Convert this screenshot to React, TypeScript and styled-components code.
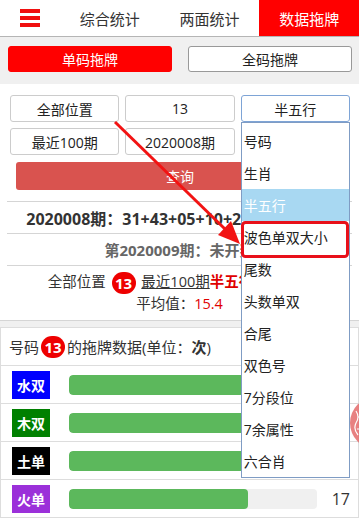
import React from 'react'
import styled, { createGlobalStyle } from 'styled-components'

const GlobalStyle = createGlobalStyle`
  html, body { margin:0; padding:0; background:#fff; }
  body { font-family: "Open Sans", "Noto Sans CJK SC", sans-serif; color:#333; }
  * { box-sizing:border-box; }
`

const Page = styled.div`
  position:relative;
  width:359px;
  height:518px;
  overflow:hidden;
  background:#fff;
`

const Header = styled.div`
  display:flex;
  height:37px;
  border-bottom:1px solid #b5b5b5;
`

const Burger = styled.div`
  width:60px;
  display:flex;
  flex-direction:column;
  justify-content:center;
  gap:3px;
  padding-left:20px;
  span{
    display:block;
    width:20px;
    height:4px;
    background:#f01010;
  }
`

const Tab = styled.div<{ $active?: boolean }>`
  width:100px;
  display:flex;
  align-items:center;
  justify-content:center;
  font-size:15px;
  color:${p => (p.$active ? '#fff' : '#333')};
  background:${p => (p.$active ? '#ff0000' : 'transparent')};
`

const SubBar = styled.div`
  display:grid;
  grid-template-columns:1fr 1fr;
  column-gap:16px;
  padding:9px 7px 12px 8px;
  background:#f0f0f0;
`

const SubBtn = styled.div<{ $active?: boolean }>`
  height:26px;
  display:flex;
  align-items:center;
  justify-content:center;
  border-radius:3px;
  font-size:14px;
  color:${p => (p.$active ? '#fff' : '#222')};
  background:${p => (p.$active ? '#ff0000' : '#fff')};
  border:1px solid ${p => (p.$active ? '#ff0000' : '#999')};
`

const Form = styled.div`
  padding:11px 9px 11px 10px;
`

const FieldGrid = styled.div`
  display:grid;
  grid-template-columns:repeat(3, 1fr);
  gap:6px;
`

const Field = styled.div<{ $focus?: boolean }>`
  position:relative;
  height:27px;
  display:flex;
  align-items:center;
  justify-content:center;
  border:1px solid ${p => (p.$focus ? '#7ea4d6' : '#ccc')};
  border-radius:3px;
  font-size:14px;
  color:#222;
`

const Dropdown = styled.ul`
  position:absolute;
  top:26px;
  left:-1px;
  width:calc(100% + 2px);
  margin:0;
  padding:2px 0 0;
  list-style:none;
  background:#fff;
  border:1px solid #7f9cc4;
  z-index:5;
`

const Option = styled.li<{ $selected?: boolean }>`
  height:32px;
  display:flex;
  align-items:center;
  padding-left:2px;
  font-size:14px;
  color:${p => (p.$selected ? '#fff' : '#222')};
  background:${p => (p.$selected ? '#a8d8f2' : '#fff')};
`

const QueryBtn = styled.div`
  margin:7px 6px 0;
  height:28px;
  display:flex;
  align-items:center;
  justify-content:center;
  border-radius:3px;
  background:#d9534f;
  color:#fff;
  font-size:14px;
`

const Results = styled.div`
  border-bottom:1px solid #d5d5d5;
`

const ResultRow = styled.div<{ $muted?: boolean }>`
  margin:0 7px;
  height:32px;
  display:flex;
  align-items:center;
  justify-content:center;
  white-space:nowrap;
  border-top:1px solid #d5d5d5;
  font-size:${p => (p.$muted ? '15px' : '16px')};
  font-weight:700;
  color:${p => (p.$muted ? '#666' : '#333')};
`

const Summary = styled.div`
  margin:0 7px;
  padding:6px 0;
  border-top:1px solid #d5d5d5;
  text-align:center;
  line-height:20px;
  font-size:14.5px;
  color:#333;
`

const Line = styled.div`
  white-space:nowrap;
`

const Badge = styled.span`
  display:inline-block;
  min-width:24px;
  height:22px;
  padding:0 3px;
  margin:0 2px;
  border-radius:11px;
  background:#ee0000;
  color:#fff;
  font-weight:700;
  font-size:15px;
  line-height:22px;
  text-align:center;
  vertical-align:middle;
`

const Link = styled.span`
  text-decoration:underline;
`

const Red = styled.span<{ $bold?: boolean }>`
  color:#e00000;
  font-weight:${p => (p.$bold ? 700 : 400)};
`

const Gap = styled.div`
  height:6px;
  background:#f0f0f0;
`

const Card = styled.div`
  border:1px solid #ddd;
  border-bottom:none;
`

const CardTitle = styled.div`
  height:38px;
  display:flex;
  align-items:center;
  padding-left:8px;
  border-bottom:1px solid #ddd;
  font-size:15px;
  color:#333;
  b{ font-weight:700; }
`

const DataRow = styled.div`
  height:38px;
  display:flex;
  align-items:center;
  padding:0 8px 0 11px;
  border-bottom:1px solid #ddd;
`

const Label = styled.div<{ $bg: string }>`
  width:38px;
  height:28px;
  display:flex;
  align-items:center;
  justify-content:center;
  background:${p => p.$bg};
  color:#fff;
  font-size:14px;
  font-weight:700;
`

const Track = styled.div`
  flex:1;
  height:20px;
  margin-left:19px;
  border-radius:4px;
  background:#f0f0f0;
  overflow:hidden;
`

const Fill = styled.div`
  height:100%;
  background:#5cb85c;
  border-radius:4px;
`

const Count = styled.div`
  width:33px;
  text-align:right;
  font-size:16px;
  color:#333;
`

const Stamp = styled.svg`
  position:absolute;
  top:397px;
  left:349px;
  z-index:4;
`

const Overlay = styled.svg`
  position:absolute;
  top:0;
  left:0;
  z-index:10;
  pointer-events:none;
`

const options = ['号码', '生肖', '半五行', '波色单双大小', '尾数', '头数单双', '合尾', '双色号', '7分段位', '7余属性', '六合肖']

const rows = [
  { name: '水双', color: '#0000ff', count: 20 },
  { name: '木双', color: '#008000', count: 19 },
  { name: '土单', color: '#000000', count: 18 },
  { name: '火单', color: '#9b30d9', count: 17 },
]

export default function App() {
  const max = 20
  return (
    <>
      <GlobalStyle />
      <Page>
        <Header>
          <Burger><span /><span /><span /></Burger>
          <Tab>综合统计</Tab>
          <Tab>两面统计</Tab>
          <Tab $active>数据拖牌</Tab>
        </Header>
        <SubBar>
          <SubBtn $active>单码拖牌</SubBtn>
          <SubBtn>全码拖牌</SubBtn>
        </SubBar>
        <Form>
          <FieldGrid>
            <Field>全部位置</Field>
            <Field>13</Field>
            <Field $focus>
              半五行
              <Dropdown>
                {options.map(o => (
                  <Option key={o} $selected={o === '半五行'}>{o}</Option>
                ))}
              </Dropdown>
            </Field>
            <Field>最近100期</Field>
            <Field>2020008期</Field>
          </FieldGrid>
          <QueryBtn>查询</QueryBtn>
        </Form>
        <Results>
          <ResultRow>2020008期：31+43+05+10+22+37+09+26</ResultRow>
          <ResultRow $muted>第2020009期：未开奖</ResultRow>
          <Summary>
            <Line>全部位置 <Badge>13</Badge> <Link>最近100期</Link><Red $bold>半五行</Red>拖牌统计</Line>
            <Line>平均值：<Red>15.4</Red></Line>
          </Summary>
        </Results>
        <Gap />
        <Card>
          <CardTitle>号码 <Badge>13</Badge> 的拖牌数据(单位：<b>次</b>)</CardTitle>
          {rows.map(r => (
            <DataRow key={r.name}>
              <Label $bg={r.color}>{r.name}</Label>
              <Track><Fill style={{ width: `${(r.count / max) * 85}%` }} /></Track>
              <Count>{r.count}</Count>
            </DataRow>
          ))}
        </Card>
        <Stamp width="50" height="52" viewBox="0 0 50 52">
          <circle cx="27" cy="26" r="26" fill="#e57373" opacity="0.9" />
          <path d="M7 14 q4 6 0 12 q-3 6 2 12 M9 20 h4 M8 32 h5" stroke="#fff" strokeWidth="1.2" fill="none" />
        </Stamp>
        <Overlay width="359" height="518" viewBox="0 0 359 518">
          <line x1="115" y1="122" x2="226" y2="230" stroke="#f21313" strokeWidth="3" />
          <polygon points="240,244 218,235 231,221" fill="#f21313" />
          <rect x="242.5" y="222.5" width="105" height="34" rx="3" fill="none" stroke="#e8101a" strokeWidth="3" />
        </Overlay>
      </Page>
    </>
  )
}
